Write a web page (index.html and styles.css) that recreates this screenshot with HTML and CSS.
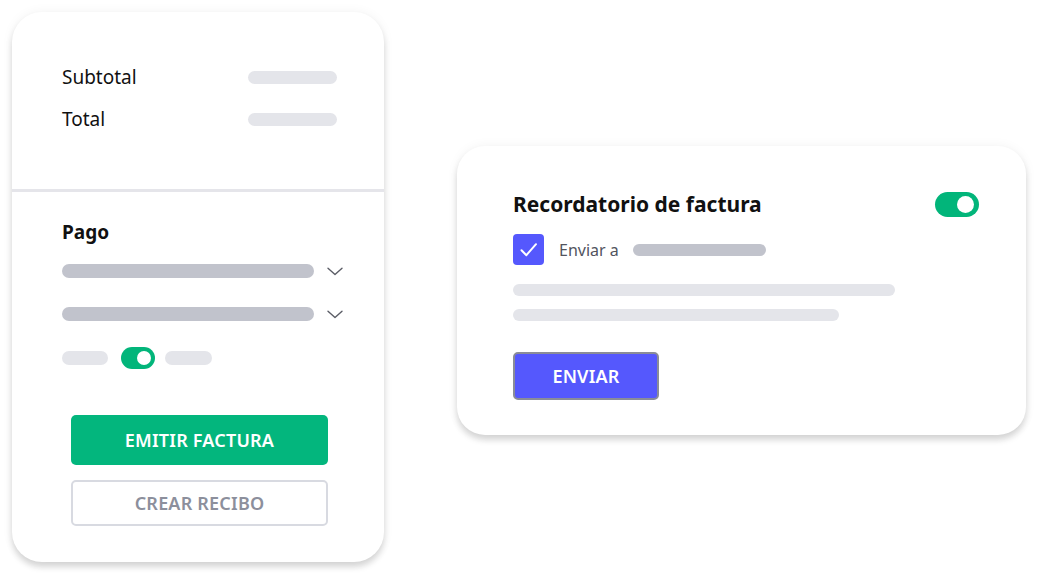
FILE: index.html
```html
<!DOCTYPE html>
<html lang="es">
<head>
<meta charset="utf-8">
<link rel="stylesheet" href="styles.css">
</head>
<body>
<div class="stage">
  <section class="card invoice">
    <div class="totals">
      <div class="row"><span class="label">Subtotal</span><span class="pill sum"></span></div>
      <div class="row"><span class="label">Total</span><span class="pill sum"></span></div>
    </div>
    <div class="payment">
      <div class="title">Pago</div>
      <div class="select first"><span class="bar dark wide"></span>
        <svg class="chev" width="16" height="9" viewBox="0 0 16 9"><path d="M1 1.2 L8 7.6 L15 1.2" fill="none" stroke="#5b5d66" stroke-width="1.4" stroke-linecap="round" stroke-linejoin="round"/></svg>
      </div>
      <div class="select second"><span class="bar dark wide"></span>
        <svg class="chev" width="16" height="9" viewBox="0 0 16 9"><path d="M1 1.2 L8 7.6 L15 1.2" fill="none" stroke="#5b5d66" stroke-width="1.4" stroke-linecap="round" stroke-linejoin="round"/></svg>
      </div>
      <div class="switchrow">
        <span class="bar light short"></span>
        <span class="toggle small"><span class="knob"></span></span>
        <span class="bar light short2"></span>
      </div>
      <div class="btn primary">EMITIR FACTURA</div>
      <div class="btn outline">CREAR RECIBO</div>
    </div>
  </section>

  <section class="card reminder">
    <div class="head">
      <div class="rtitle">Recordatorio de factura</div>
      <span class="toggle big"><span class="knob"></span></span>
    </div>
    <div class="sendrow">
      <span class="check">
        <svg width="31" height="31" viewBox="0 0 31 31"><path d="M8.5 16.2 L13.4 21.2 L23 10.2" fill="none" stroke="#fff" stroke-width="2" stroke-linecap="round" stroke-linejoin="round"/></svg>
      </span>
      <span class="sendlabel">Enviar a</span>
      <span class="bar dark email"></span>
    </div>
    <span class="bar light line1"></span>
    <span class="bar light line2"></span>
    <div class="btn send">ENVIAR</div>
  </section>
</div>
</body>
</html>
```

FILE: styles.css
```css
* { box-sizing: border-box; }
html, body { margin: 0; padding: 0; background: #fff; }
body { font-family: "Noto Sans", "Open Sans", sans-serif; color: #111; width: 1040px; height: 580px; overflow: hidden; }

.stage { display: flex; align-items: flex-start; padding: 12px 0 0 12px; }

.card {
  background: #fff;
  box-shadow: 0 5px 6px rgba(0,0,0,0.15), 0 0 12px rgba(0,0,0,0.05);
}

.invoice { width: 372px; height: 550px; border-radius: 30px; overflow: hidden; }

.totals {
  height: 180px;
  padding: 53px 47px 0 50px;
  border-bottom: 3px solid #e5e5ea;
  display: flex; flex-direction: column; gap: 18px;
}
.row { display: flex; justify-content: space-between; align-items: center; height: 24px; }
.label { font-size: 19px; line-height: 24px; color: #111; }

.pill, .bar { display: block; border-radius: 7px; }
.sum { width: 89px; height: 13px; background: #e4e5ea; }

.payment { padding: 28px 0 0 50px; display: flex; flex-direction: column; align-items: flex-start; }
.title { font-size: 19px; font-weight: 700; line-height: 24px; color: #111; }

.select { display: flex; align-items: center; gap: 13px; height: 14px; }
.select.first { margin-top: 20px; }
.select.second { margin-top: 29px; }
.chev { display: block; }
.dark { background: #c1c3cc; }
.light { background: #e4e5ea; }
.wide { width: 252px; height: 14px; }

.switchrow { display: flex; align-items: center; margin-top: 26px; height: 22px; }
.short { width: 46px; height: 14px; }
.short2 { width: 47px; height: 14px; margin-left: 10px; }

.toggle { display: flex; align-items: center; justify-content: flex-end; background: #02b57a; }
.toggle.small { width: 34px; height: 22px; border-radius: 11px; padding-right: 4px; margin-left: 13px; }
.toggle.small .knob { width: 14px; height: 14px; }
.knob { display: block; border-radius: 50%; background: #fff; }

.btn {
  display: flex; align-items: center; justify-content: center;
  font-size: 18px; font-weight: 600; letter-spacing: 0.2px;
}
.primary {
  margin: 46px 0 0 9px; width: 257px; height: 50px; border-radius: 5px;
  background: #03b67d; color: #fff;
}
.outline {
  margin: 15px 0 0 9px; width: 257px; height: 46px; border-radius: 5px;
  border: 2px solid #d8dae1; color: #8c8f9c; background: #fff;
}

.reminder {
  margin: 134px 0 0 73px; width: 569px; height: 289px; border-radius: 28px;
  padding: 46px 47px 0 56px;
  display: flex; flex-direction: column; align-items: flex-start;
}
.head { display: flex; justify-content: space-between; align-items: center; width: 100%; height: 24px; }
.rtitle { font-size: 21px; font-weight: 700; line-height: 24px; color: #111; }
.toggle.big { width: 44px; height: 25px; border-radius: 13px; padding-right: 5px; }
.toggle.big .knob { width: 17px; height: 17px; }

.sendrow { display: flex; align-items: center; margin-top: 18px; height: 31px; }
.check { display: block; width: 31px; height: 31px; border-radius: 4px; background: #5558fd; }
.check svg { display: block; }
.sendlabel { font-size: 16px; color: #52545e; margin-left: 15px; line-height: 20px; }
.email { width: 133px; height: 12px; border-radius: 6px; margin-left: 14px; }

.line1 { width: 382px; height: 12px; border-radius: 6px; margin-top: 19px; }
.line2 { width: 326px; height: 12px; border-radius: 6px; margin-top: 13px; }

.send {
  margin-top: 31px; width: 146px; height: 48px; border-radius: 5px;
  background: #5558fd; color: #fff; border: 2px solid #8a8c98;
}
```
